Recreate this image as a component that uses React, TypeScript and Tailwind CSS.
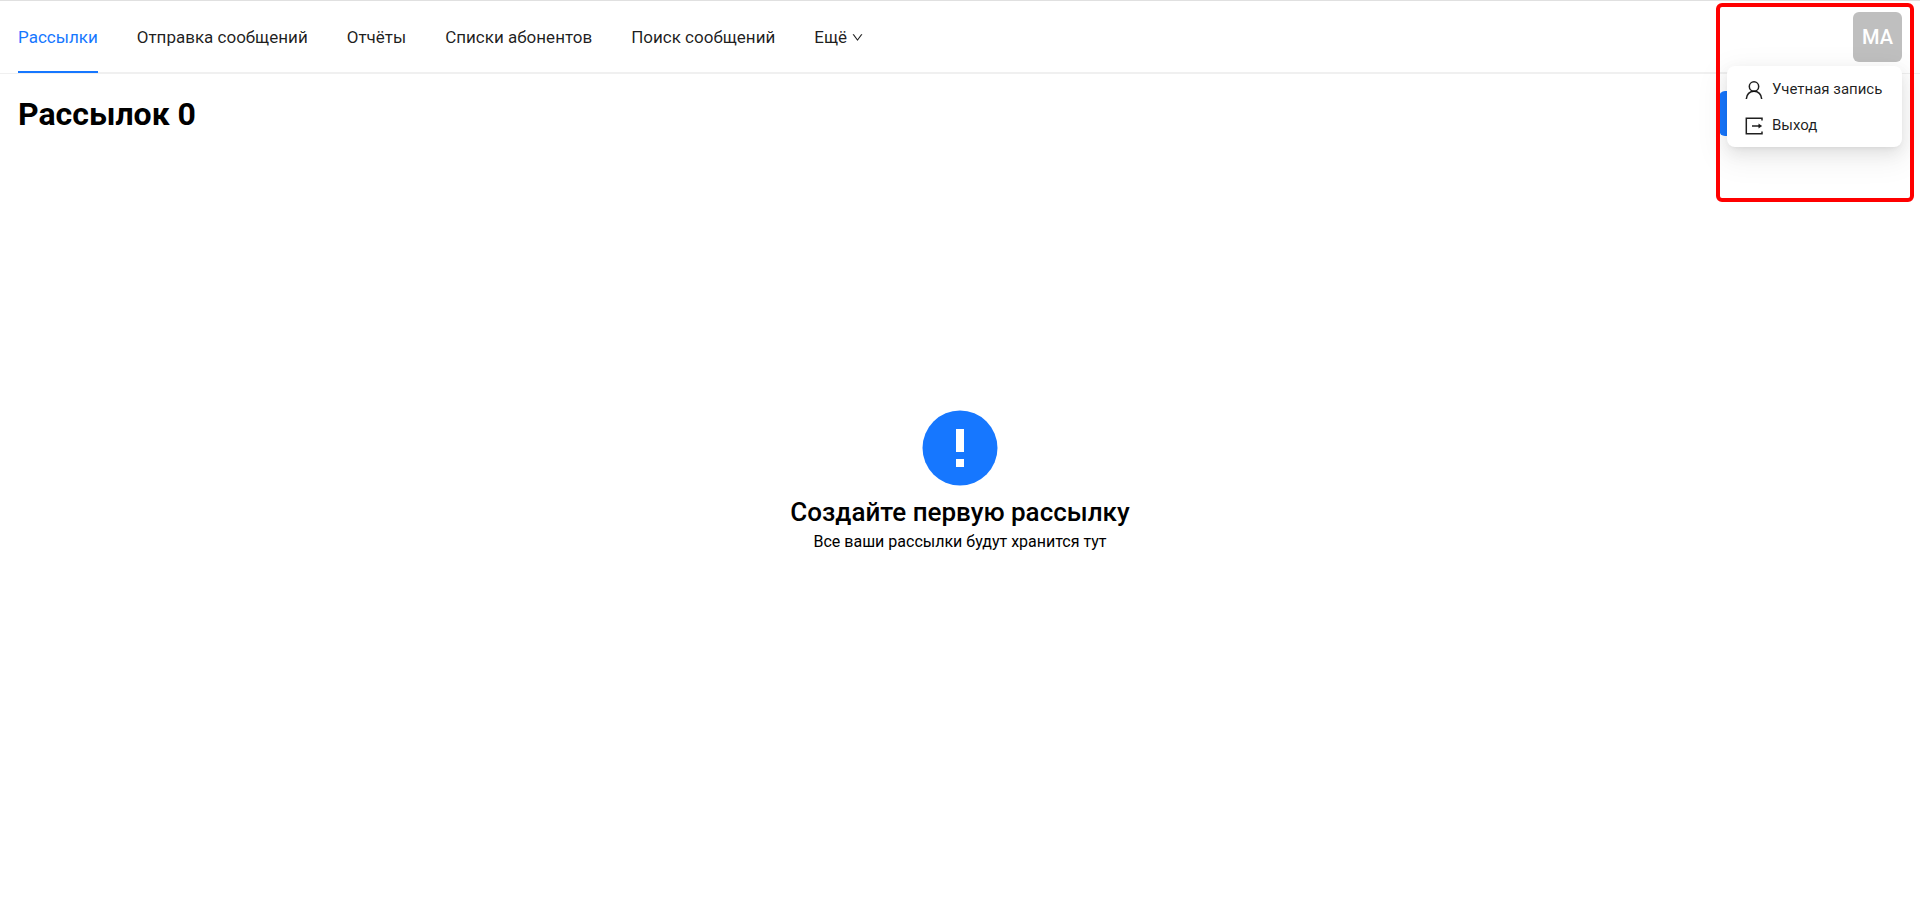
import React from "react";
import { AiOutlineDown } from "react-icons/ai";

const links = ["Отправка сообщений", "Отчёты", "Списки абонентов", "Поиск сообщений"];

function UserIcon() {
  return (
    <svg viewBox="0 0 18 18" className="size-[18px] shrink-0" fill="none" stroke="currentColor" strokeWidth="1.5" aria-hidden="true">
      <circle cx="9" cy="5.5" r="4.7" />
      <path d="M1.3 18c.2-4.6 3.4-7.800 7.700-7.800s7.500 3.200 7.700 7.800" />
    </svg>
  );
}

function ExitIcon() {
  return (
    <svg viewBox="0 0 18 18" className="size-[18px] shrink-0" fill="none" stroke="currentColor" strokeWidth="1.500" aria-hidden="true">
      <path d="M17 3.500V1.300H1.300v15.400H17v-2.200M7 9h7.500" />
      <path d="M13.500 6.500 17.200 9l-3.700 2.500z" fill="currentColor" stroke="none" />
    </svg>
  );
}

function Header() {
  return (
    <header className="flex h-[74px] items-stretch border-t border-b border-t-[#e0e0e0] border-b-[#f0f0f0] px-[18px]">
      <nav aria-label="Основное меню" className="flex flex-1 gap-[39px] border-b border-[#f0f0f0] text-[17px] text-black/88">
        <a href="#" aria-current="page" className="-mb-px flex items-center border-b-2 border-[#1677ff] pt-[3px] text-[#1677ff]">
          Рассылки
        </a>
        {links.map((label) => (
          <a key={label} href="#" className="flex items-center pt-[2px]">
            {label}
          </a>
        ))}
        <button type="button" className="flex items-center gap-1 pt-[2px]">
          Ещё
          <AiOutlineDown className="size-[13px]" />
        </button>
      </nav>
      <div className="relative flex items-center">
        <button
          type="button"
          aria-haspopup="menu"
          aria-expanded="true"
          className="h-[50px] w-[49px] rounded-md bg-[#bfbfbf] text-xl font-medium text-white"
        >
          МА
        </button>
        <UserMenu />
        <div
          aria-hidden="true"
          className="pointer-events-none absolute top-[2px] right-[-12px] z-20 h-[199px] w-[198px] rounded-md border-4 border-[#ff0000]"
        />
      </div>
    </header>
  );
}

function UserMenu() {
  return (
    <div
      role="menu"
      className="absolute top-[65px] right-0 z-10 flex h-[81px] w-[175px] flex-col justify-center rounded-lg bg-white px-[18px] pt-[2px] text-[15px] text-black/88 shadow-[0_6px_16px_0_rgba(0,0,0,0.08),0_3px_6px_-4px_rgba(0,0,0,0.12),0_9px_28px_8px_rgba(0,0,0,0.05)]"
    >
      <a role="menuitem" href="#" className="flex h-9 items-center gap-[9px] whitespace-nowrap">
        <UserIcon />
        Учетная запись
      </a>
      <a role="menuitem" href="#" className="flex h-9 items-center gap-[9px] whitespace-nowrap">
        <ExitIcon />
        Выход
      </a>
    </div>
  );
}

export default function App() {
  return (
    <div className="flex min-h-screen flex-col bg-white font-['Roboto','Noto_Sans',sans-serif] text-black">
      <Header />
      <main className="flex flex-1 flex-col">
        <div className="flex items-center justify-between px-[18px] pt-[17px]">
          <h1 className="pt-[2px] text-[32px] leading-[43px] font-bold">Рассылок 0</h1>
          <button type="button" aria-label="Создать рассылку" className="h-[45px] w-[183px] rounded-md bg-[#1677ff]" />
        </div>
        <section className="flex flex-col items-center pt-[274px]">
          <svg viewBox="0 0 76 76" className="size-[76px]" aria-hidden="true">
            <circle cx="38" cy="38" r="37.5" fill="#1677ff" />
            <path d="M34 19h8v23h-8zM34 49h8v8h-8z" fill="#fff" />
          </svg>
          <h2 className="mt-2 text-[26px] leading-9 font-medium">Создайте первую рассылку</h2>
          <p className="text-base leading-6">Все ваши рассылки будут хранится тут</p>
        </section>
      </main>
    </div>
  );
}
